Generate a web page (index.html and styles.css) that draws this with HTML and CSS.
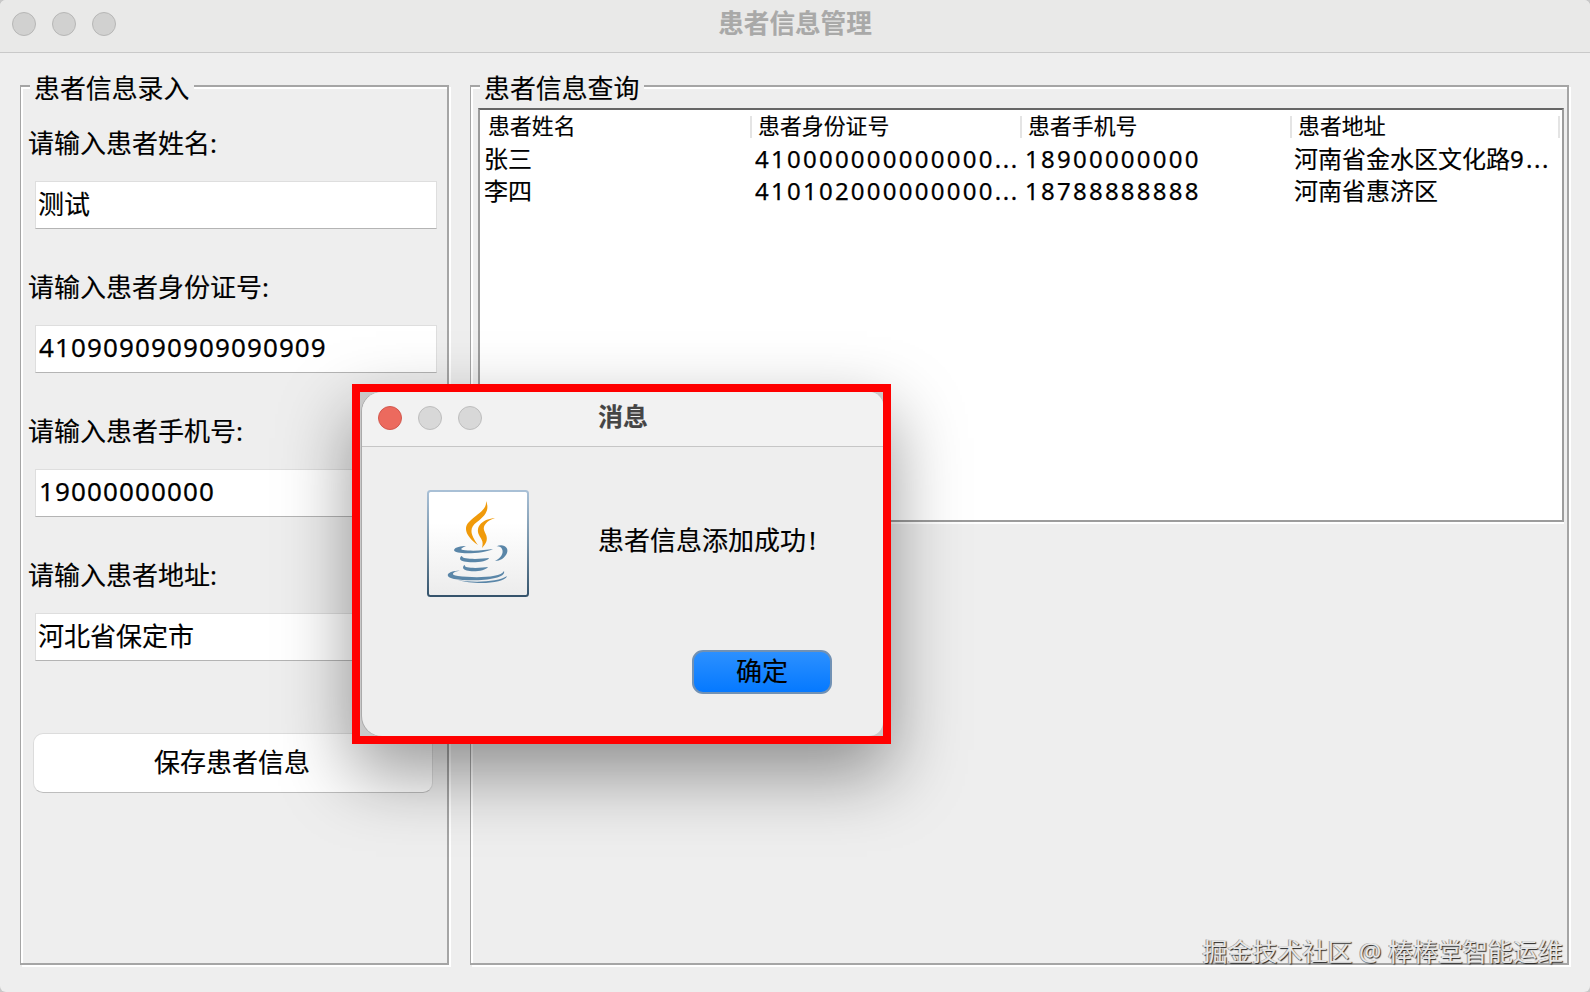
FILE: index.html
```html
<!DOCTYPE html>
<html lang="zh-CN">

<head>
  <meta charset="utf-8">
  <title>患者信息管理</title>
  <link rel="stylesheet" href="styles.css">
</head>

<body>
  <div class="window">
    <header class="titlebar">
      <div class="lights">
        <span class="light"></span>
        <span class="light"></span>
        <span class="light"></span>
      </div>
      <h1 class="title">患者信息管理</h1>
    </header>

    <main class="content">
      <section class="panel entry">
        <h2 class="legend">患者信息录入</h2>
        <form class="form">
          <div class="field">
            <label for="name">请输入患者姓名:</label>
            <input type="text" id="name" value="测试">
          </div>
          <div class="field">
            <label for="idcard">请输入患者身份证号:</label>
            <input type="text" id="idcard" value="410909090909090909">
          </div>
          <div class="field">
            <label for="phone">请输入患者手机号:</label>
            <input type="text" id="phone" value="19000000000">
          </div>
          <div class="field">
            <label for="address">请输入患者地址:</label>
            <input type="text" id="address" value="河北省保定市">
          </div>
          <button type="button" class="save">保存患者信息</button>
        </form>
      </section>

      <section class="panel query">
        <h2 class="legend">患者信息查询</h2>
        <div class="table">
          <div class="row head">
            <div>患者姓名</div>
            <div>患者身份证号</div>
            <div>患者手机号</div>
            <div>患者地址</div>
          </div>
          <div class="row">
            <div>张三</div>
            <div class="num">410000000000000<span class="dots">...</span></div>
            <div class="num">18900000000</div>
            <div>河南省金水区文化路<span class="num">9<span class="dots">...</span></span></div>
          </div>
          <div class="row">
            <div>李四</div>
            <div class="num">410102000000000<span class="dots">...</span></div>
            <div class="num">18788888888</div>
            <div>河南省惠济区</div>
          </div>
        </div>
      </section>
    </main>
  </div>

  <div class="highlight">
    <div class="dialog">
      <header class="dialog-bar">
        <div class="lights">
          <span class="light close"></span>
          <span class="light"></span>
          <span class="light"></span>
        </div>
        <div class="dialog-title">消息</div>
      </header>
      <div class="dialog-body">
        <svg class="java" viewBox="0 0 102 107" width="102" height="107">
          <defs>
            <linearGradient id="edge" x1="0" y1="0" x2="0" y2="1">
              <stop offset="0" stop-color="#a9c0d6" />
              <stop offset="0.5" stop-color="#7592a8" />
              <stop offset="1" stop-color="#35536b" />
            </linearGradient>
            <linearGradient id="face" x1="0" y1="0" x2="0" y2="1">
              <stop offset="0.3" stop-color="#ffffff" />
              <stop offset="1" stop-color="#ececec" />
            </linearGradient>
          </defs>
          <rect x="1" y="1" width="100" height="105" rx="2.500" fill="url(#face)" stroke="url(#edge)" stroke-width="2" />
          <g fill="#f09a0a">
            <path d="M59 11C63 20 58 26 50 32C42 38 43 44 51 55C41 48 35 39 42 32C51 23 60 20 59 11Z" />
            <path d="M68 28C59 31 56 36 57 40C58 44 64 49 55 58C57 51 54 49 52 45C48 36 56 29 68 28Z" />
          </g>
          <g fill="#5a86a8">
            <path d="M39 56C32 59 33 60 41 60.500C50 61 60 60 66 59C57 64 27 65 27 60C28 57 34 56 39 56Z" />
            <path d="M69 56.500C77 53 82 58 80 63C78 68 73 71 68 71C74 68 77 63 75 59C74 57 72 56 69 56.500Z" />
            <path d="M35 66C35 70 55 69 62 68C61 73 34 74 33 69C33 67 34 66 35 66Z" />
            <path d="M38 75C36 79 55 78 61 77C58 82 38 83 36 78C36 76 37 75 38 75Z" />
            <path d="M33 80.500C25 82 23 85 31 86C46 88 74 88 77 81C80 90 45 92 27 89C17 87 19 81 33 80.500Z" />
            <path d="M31 90C46 93 72 92 80 86C78 94 46 95 31 90Z" />
          </g>
        </svg>
        <p class="message">患者信息添加成功<span class="mark">!</span></p>
      </div>
      <div class="dialog-actions">
        <button type="button" class="ok">确定</button>
      </div>
    </div>
  </div>

  <div class="watermark">掘金技术社区 @ 棒棒堂智能运维</div>
</body>

</html>
```

FILE: styles.css
```css
* {
  box-sizing: border-box;
}

body {
  margin: 0;
  background: #c8c8c8;
  font-family: "Noto Sans", "Noto Sans CJK SC", sans-serif;
  font-size: 26px;
  color: #000;
  -webkit-text-stroke: 0.15px;
}

h1,
h2,
p {
  margin: 0;
  font-weight: normal;
}

input,
button {
  font: inherit;
  color: inherit;
}

.window {
  height: 992px;
  border-radius: 6px;
  background: #eee;
  overflow: hidden;
}

.titlebar {
  display: grid;
  grid-template-columns: 1fr auto 1fr;
  height: 53px;
  background: #e9e9e8;
  border-bottom: 1px solid #c9c9c9;
}

.lights {
  display: flex;
  gap: 16px;
  padding: 12px;
}

.light {
  width: 24px;
  height: 24px;
  border-radius: 50%;
  background: #d1d1d0;
  border: 1px solid #b7b7b6;
}

.title {
  font-size: 25.6px;
  font-weight: bold;
  line-height: 48px;
  color: #a9a9a8;
}

.content {
  display: flex;
  gap: 21px;
  padding: 32px 21px 0 20px;
}

/* etched titled border */
.panel {
  height: 880px;
  border: 2px solid #a5a5a5;
  border-left-width: 1px;
  box-shadow: 2px 2px 0 #fff, inset 2px 2px 0 #fff;
}

.entry {
  width: 429px;
}

.query {
  width: 1099px;
}

.legend {
  width: 164px;
  height: 30px;
  margin: -13px 0 0 9px;
  padding-left: 4px;
  font-size: 25.9px;
  line-height: 29px;
  white-space: nowrap;
  background: #eee;
}

.form {
  padding: 17px 11px 0 7px;
}

.field {
  height: 144px;
}

.field label {
  display: block;
  height: 42px;
  font-size: 26px;
  line-height: 44px;
}

.field input {
  display: block;
  width: 402px;
  height: 48px;
  margin: 18px 0 0 7px;
  padding: 0 0 4px 2px;
  border: 1px solid #dedede;
  border-bottom: 1px solid #b4b4b4;
  background: #fff;
}

.field #idcard,
.field #phone {
  padding-left: 3px;
  letter-spacing: 1.12px;
  -webkit-text-stroke: 0.25px;
}

.save {
  display: block;
  width: 400px;
  height: 60px;
  margin: 36px 0 0 5px;
  padding: 0 2px 4px 0;
  border: 1px solid #dcdcdc;
  border-bottom-color: #bdbdbd;
  border-radius: 10px;
  background: #fff;
}

.table {
  width: 1086px;
  height: 414px;
  margin: 4px 0 0 7px;
  padding-top: 2px;
  border: 2px solid #9c9c9c;
  border-top-color: #666;
  background: #fff;
  box-shadow: 0 2px 0 #fff;
}

.row {
  display: grid;
  grid-template-columns: 270px 270px 270px 1fr;
  height: 32px;
  font-size: 24px;
  line-height: 32px;
  white-space: nowrap;
}

.row > div {
  padding-left: 4px;
}

.row > .num {
  padding-left: 5px;
}

.row .num {
  letter-spacing: 2.25px;
  -webkit-text-stroke: 0.25px;
}

.row .dots {
  letter-spacing: 1.6px;
}

.head {
  height: 31px;
  font-size: 21.9px;
}

.head > div {
  height: 22px;
  margin: 4px -2px 0 0;
  padding-left: 8px;
  line-height: 20px;
  border-right: 2px solid #e4e4e4;
}

.head > div:last-child {
  margin-right: 2px;
}

/* dialog with the red box drawn round it */
.highlight {
  position: absolute;
  left: 352px;
  top: 384px;
  width: 539px;
  height: 360px;
  padding-left: 2px;
  border: 8px solid #f00;
  background: #c9c9c9;
  box-shadow: 0 30px 68px rgba(0, 0, 0, 0.4);
}

.dialog {
  height: 344px;
  border-radius: 20px 14px 14px 20px;
  background: #eee;
  box-shadow: -1px 0 0 #aaa;
  overflow: hidden;
}

.dialog-bar {
  display: grid;
  grid-template-columns: 1fr auto 1fr;
  height: 55px;
  background: #f2f2f2;
  border-bottom: 1px solid #c6c6c6;
}

.dialog-bar .lights {
  padding: 14px 16px;
}

.dialog-bar .light {
  background: #d8d8d8;
  border-color: #bdbdbd;
}

.dialog-bar .close {
  background: #ec6a5e;
  border-color: #d2584e;
}

.dialog-title {
  padding-left: 1px;
  font-size: 25px;
  font-weight: bold;
  line-height: 49px;
  color: #454545;
}

.dialog-body {
  display: flex;
  gap: 69px;
  padding: 43px 0 0 65px;
}

.message {
  padding-top: 30px;
  line-height: 41px;
}

.mark {
  margin-left: 3px;
}

.dialog-actions {
  display: flex;
  justify-content: flex-end;
  padding: 53px 51px 0 0;
}

.ok {
  width: 140px;
  height: 44px;
  padding: 0 0 3px;
  border: 2px solid #7191b4;
  border-radius: 11px;
  background: linear-gradient(#2c90ff, #0579ff);
  line-height: 34px;
}

.watermark {
  position: absolute;
  right: 27px;
  bottom: 25px;
  font-size: 25px;
  line-height: 32px;
  color: #e6e6e6;
  text-shadow: 1px 1px 1px #222, -1px 0 0 #999;
}
```
